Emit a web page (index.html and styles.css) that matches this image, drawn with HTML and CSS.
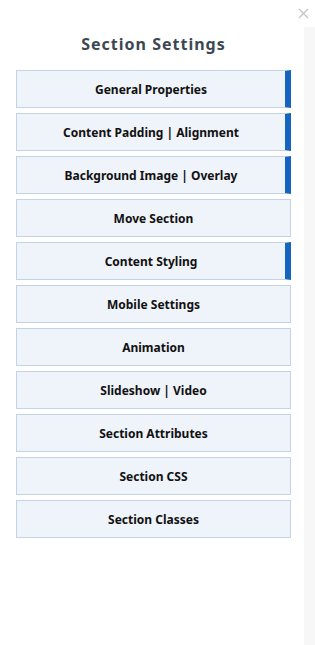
FILE: index.html
```html
<!DOCTYPE html>
<html lang="en">
  <head>
    <title>Section Settings</title>
    <meta name="viewport" content="width=device-width, initial-scale=1" />
    <link rel="stylesheet" href="styles.css">
  </head>
  <body>
    <div class="modal">
      <button class="cerrar" aria-label="Close">
        <svg width="11" height="11" viewBox="0 0 11 11">
          <path d="M1 1L10 10M10 1L1 10" stroke="#c4c4c4" stroke-width="1.3" fill="none" />
        </svg>
      </button>

      <div class="panel">
        <h2 class="titulo">Section Settings</h2>
        <div class="lista">
          <button class="opcion marcada">General Properties</button>
          <button class="opcion marcada">Content Padding | Alignment</button>
          <button class="opcion marcada">Background Image | Overlay</button>
          <button class="opcion">Move Section</button>
          <button class="opcion marcada">Content Styling</button>
          <button class="opcion">Mobile Settings</button>
          <button class="opcion">Animation</button>
          <button class="opcion">Slideshow | Video</button>
          <button class="opcion">Section Attributes</button>
          <button class="opcion">Section CSS</button>
          <button class="opcion">Section Classes</button>
        </div>
      </div>

      <div class="pista"></div>
    </div>
  </body>
</html>
```

FILE: styles.css
```css
body {
  margin: 0;
  background-color: #ffffff;
  font-family: "Noto Sans", "Open Sans", sans-serif;
}

.modal {
  position: relative;
  display: flex;
  min-height: 645px;
}

.cerrar {
  position: absolute;
  top: 7px;
  right: 6px;
  border: none;
  background: none;
  padding: 0;
  width: 11px;
  height: 11px;
  cursor: pointer;
}

.panel {
  flex: 1;
  padding: 0 13px 0 16px;
}

.titulo {
  margin: 33px 0 15px;
  text-align: center;
  font-size: 16px;
  line-height: 22px;
  letter-spacing: 1px;
  font-weight: bold;
  color: #3b4753;
}

.lista {
  display: flex;
  flex-direction: column;
  gap: 5px;
}

.opcion {
  height: 38px;
  border: 1px solid #c5d3e7;
  background-color: #eff3fa;
  font-family: "Noto Sans", "Open Sans", sans-serif;
  font-size: 12px;
  font-weight: bold;
  color: #111111;
  text-align: center;
  padding: 0;
  cursor: pointer;
}

.marcada {
  border-right: 6px solid #1565c0;
}

.pista {
  width: 11px;
  margin-top: 27px;
  background-color: #f7f7f7;
}
```
